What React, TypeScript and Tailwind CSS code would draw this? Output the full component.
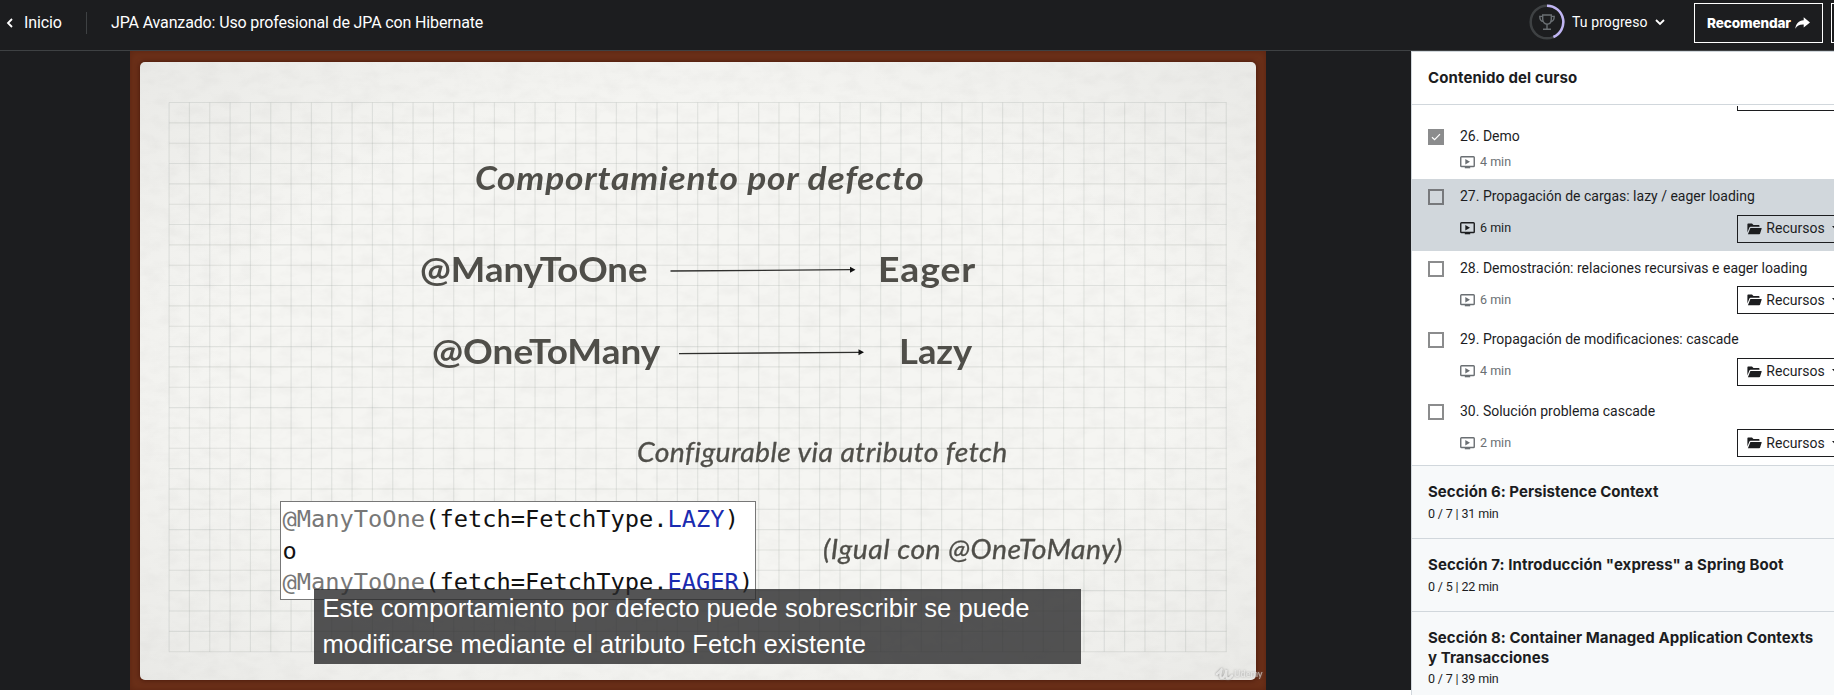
import React from "react";

type Lecture = { title: string; time: string; done?: boolean; active?: boolean; resources?: boolean };
type Section = { title: string; meta: string; tracking: string };

const lectures: Lecture[] = [
  { title: "26. Demo", time: "4 min", done: true },
  { title: "27. Propagación de cargas: lazy / eager loading", time: "6 min", active: true, resources: true },
  { title: "28. Demostración: relaciones recursivas e eager loading", time: "6 min", resources: true },
  { title: "29. Propagación de modificaciones: cascade", time: "4 min", resources: true },
  { title: "30. Solución problema cascade", time: "2 min", resources: true },
];

const sections: Section[] = [
  { title: "Sección 6: Persistence Context", meta: "0 / 7 | 31 min", tracking: "tracking-[0.04px]" },
  { title: 'Sección 7: Introducción "express" a Spring Boot', meta: "0 / 5 | 22 min", tracking: "tracking-[0.08px]" },
  { title: "Sección 8: Container Managed Application Contexts y Transacciones", meta: "0 / 7 | 39 min", tracking: "tracking-[0.05px]" },
];

function VideoIcon() {
  return (
    <svg width="15" height="13" viewBox="0 0 15 13" fill="none" className="shrink-0">
      <rect x="0.75" y="0.75" width="13.5" height="9.8" rx="0.8" stroke="currentColor" strokeWidth="1.4" />
      <path d="M5.3 3v5.4L10 5.7z" fill="currentColor" />
      <path d="M4.8 11h5.4v1.3H4.8z" fill="currentColor" />
    </svg>
  );
}

function FolderIcon() {
  return (
    <svg width="15" height="12" viewBox="0 0 15 12" className="shrink-0">
      <path d="M0.4 9.5V1.6C0.4 1 0.8 0.6 1.4 0.6H5l1.5 1.5h5c.6 0 1 .4 1 1v.7H3.6c-.6 0-1 .3-1.2.8z" fill="currentColor" />
      <path d="M3.4 4.9h10.9c.3 0 .5.3.4.6l-1.6 5c-.1.4-.5.7-.9.7H.9z" fill="currentColor" />
    </svg>
  );
}

function ResourcesButton() {
  return (
    <button className="flex h-7 w-[112px] shrink-0 items-center border border-[#1c1d1f] pl-[9px] text-[14px] text-[#1c1d1f]">
      <FolderIcon />
      <span className="ml-[4px] w-[59px] whitespace-nowrap">Recursos</span>
      <svg width="8" height="5" viewBox="0 0 8 5" className="ml-[7px] shrink-0">
        <path d="M0 0h8L4 4.5z" fill="currentColor" />
      </svg>
    </button>
  );
}

function LectureRow({ item }: { item: Lecture }) {
  return (
    <li className={`flex shrink-0 pl-4 pt-2 ${item.active ? "bg-[#d1d7dc]" : "bg-white"} ${item.resources ? "h-[71.6px]" : "h-[60px]"}`}>
      <span
        className={`mt-[2px] flex size-4 shrink-0 items-center justify-center ${
          item.done ? "bg-[#8b8c8d]" : item.active ? "border-2 border-[#77797c]" : "border-2 border-[#8b8c8d]"
        }`}
      >
        {item.done && (
          <svg width="10" height="8" viewBox="0 0 10 8" fill="none">
            <path d="M1 4.2l2.6 2.4L9 1.2" stroke="white" strokeWidth="1.2" />
          </svg>
        )}
      </span>
      <div className="ml-4 flex grow flex-col font-['Roboto']">
        <span className="h-[19.6px] whitespace-nowrap text-[14px] leading-[19.6px] text-[#1c1d1f]">{item.title}</span>
        <div className={`flex items-center ${item.resources ? "mt-2 h-7" : "mt-[6px] h-5"} ${item.active ? "text-[#1c1d1f]" : "text-[#6a6f73]"}`}>
          <VideoIcon />
          <span className="ml-[5px] w-[257px] shrink-0 text-[12.500px]">{item.time}</span>
          {item.resources && <ResourcesButton />}
        </div>
      </div>
    </li>
  );
}

function SectionRow({ item }: { item: Section }) {
  return (
    <li className="shrink-0 border-t border-[#d1d7dc] bg-[#f7f9fa] px-4 pb-4 pt-4 text-[#1c1d1f]">
      <h3 className={`max-w-[400px] text-[15px] font-bold leading-[19.6px] ${item.tracking}`}>{item.title}</h3>
      <p className="mt-[3.6px] font-['Roboto'] text-[12.500px] leading-[16.8px] tracking-[-0.15px]">{item.meta}</p>
    </li>
  );
}

function Header() {
  return (
    <header className="flex h-[51px] shrink-0 border-b border-[#3e4143] bg-[#1c1d1f] pb-[5px] font-['Roboto'] text-[16px] text-white">
      <div className="flex w-[1529px] shrink-0 items-center">
        <svg width="8" height="10" viewBox="0 0 8 10" fill="none" className="ml-[6px]">
          <path d="M6 1L2 5l4 4" stroke="white" strokeWidth="1.8" />
        </svg>
        <span className="ml-[10px] w-[62px] tracking-[-0.1px]">Inicio</span>
        <span className="h-[22px] w-px bg-[#3e4143]" />
        <span className="ml-6 whitespace-nowrap tracking-[-0.14px]">JPA Avanzado: Uso profesional de JPA con Hibernate</span>
      </div>
      <div className="flex w-[165px] shrink-0 items-center">
        <svg width="36" height="36" viewBox="0 0 36 36" fill="none" className="-ml-[0.5px] -mt-px">
          <circle cx="18" cy="18" r="16.3" stroke="#3e4143" strokeWidth="2.5" />
          <path d="M18 1.7A16.300 16.300 0 0 1 24.400 33" stroke="#c0b5f3" strokeWidth="2.5" />
          <g stroke="#6a6f73" strokeWidth="1.4">
            <path d="M13.7 11h8.6v4.2c0 3-1.9 4.9-4.3 4.9s-4.3-1.9-4.3-4.9z" />
            <path d="M13.7 12.4h-2.9c0 3 1 4.8 3.6 5.1M22.3 12.4h2.9c0 3-1 4.8-3.6 5.1M18 20v5M14 25.3h8" />
          </g>
        </svg>
        <span className="ml-[7.500px] w-[83px] whitespace-nowrap text-[14px] tracking-[0.1px]">Tu progreso</span>
        <svg width="10" height="7" viewBox="0 0 10 7" fill="none">
          <path d="M1 1l4 4 4-4" stroke="white" strokeWidth="1.8" />
        </svg>
      </div>
      <div className="mt-[3px] flex h-10 w-[129px] shrink-0 items-center border border-white pl-3">
        <span className="w-[87.500px] whitespace-nowrap font-['Inter'] text-[13.600px] font-extrabold tracking-[-0.15px]">Recomendar</span>
        <svg width="15" height="12" viewBox="0 0 15 12" className="shrink-0">
          <path d="M8.7 0.3L15 5.4l-6.3 5V7.5C4.6 7.3 2.2 8.600 0.3 11.700 0.900 6.600 3.700 3.500 8.700 3.200z" fill="white" />
        </svg>
      </div>
      <div className="ml-2 mt-[3px] h-10 w-[3px] shrink-0 border-y border-l border-white" />
    </header>
  );
}

function Slide() {
  const ink = "absolute origin-left whitespace-nowrap font-['Lato'] leading-[40px] text-[#4f4e49]";
  return (
    <div className="relative h-[639px] w-[1136px] shrink-0 overflow-hidden bg-[#6b3019] shadow-[inset_0_0_6px_#5a2411]">
      <div className="absolute left-[10px] top-[11px] h-[618px] w-[1115.500px] overflow-hidden rounded-[5px] bg-[#f5f5f2] shadow-[0_0_4px_1px_rgba(50,10,0,0.5)]">
        <svg width="1116" height="618" className="block">
          <defs>
            <filter id="paper" x="0" y="0" width="100%" height="100%">
              <feTurbulence type="fractalNoise" baseFrequency="0.05 0.09" numOctaves="5" seed="4" />
              <feColorMatrix values="0 0 0 0 0.5  0 0 0 0 0.49  0 0 0 0 0.48  0.2 0 0 0 -0.08" />
            </filter>
            <radialGradient id="vignette" cx="50%" cy="50%" r="70%">
              <stop offset="60%" stopColor="#80807e" stopOpacity="0" />
              <stop offset="100%" stopColor="#80807e" stopOpacity="0.1" />
            </radialGradient>
          </defs>
          <rect width="1116" height="618" filter="url(#paper)" />
          <rect width="1116" height="618" fill="url(#vignette)" />
          <g stroke="#8c9490" strokeOpacity="0.2" strokeWidth="1.1">
            {Array.from({ length: 53 }, (_, i) => (
              <line key={"v" + i} x1={29.1 + i * 20.33} x2={29.1 + i * 20.33} y1="40.5" y2="589.700" />
            ))}
            {Array.from({ length: 28 }, (_, i) => (
              <line key={"h" + i} x1="29.1" x2="1086.500" y1={40.5 + i * 20.34} y2={40.5 + i * 20.34} />
            ))}
          </g>
        </svg>
      </div>
      <span className={`${ink} left-[344.500px] top-[106px] scale-x-[1.07] text-[33px] font-bold italic tracking-[0.75px]`}>Comportamiento por defecto</span>
      <span className={`${ink} left-[290px] top-[197.500px] scale-x-[1.075] text-[34px] font-bold`}>@ManyToOne</span>
      <span className={`${ink} left-[748px] top-[197.500px] scale-x-[1.1] text-[34px] font-bold tracking-[0.8px]`}>Eager</span>
      <span className={`${ink} left-[302px] top-[279.500px] scale-x-[1.085] text-[34px] font-bold`}>@OneToMany</span>
      <span className={`${ink} left-[768.500px] top-[279.500px] scale-x-[1.07] text-[34px] font-bold`}>Lazy</span>
      <svg width="200" height="100" viewBox="0 0 200 100" className="absolute left-[540px] top-[210px]">
        <path d="M0.500 10L181 8.700M9 92.600L189 91.300" stroke="#2f2f2d" strokeWidth="1.3" />
        <path d="M180 5.700l5.500 3-5.500 3zM188.500 88.300l5.500 3-5.500 3z" fill="#111" />
      </svg>
      <span className={`${ink} left-[506.500px] top-[380.500px] scale-x-[1.07] text-[26.500px] italic tracking-[0.37px] [-webkit-text-stroke:0.3px_#4f4e49]`}>Configurable via atributo fetch</span>
      <span className={`${ink} left-[692.500px] top-[478px] scale-x-[1.07] text-[26.500px] italic tracking-[0.48px] [-webkit-text-stroke:0.3px_#4f4e49]`}>(Igual con @OneToMany)</span>
      <pre className="absolute left-[150px] top-[450px] h-[98.500px] w-[476px] border border-[#777] bg-white pl-[1.500px] pt-[2.300px] font-['DejaVu_Sans_Mono'] text-[23.7px] leading-[31.3px] text-[#111]">
        <span className="text-[#777]">@ManyToOne</span>(fetch=FetchType.<span className="text-[#1a2bb0]">LAZY</span>){"\n"}o{"\n"}
        <span className="text-[#777]">@ManyToOne</span>(fetch=FetchType.<span className="text-[#1a2bb0]">EAGER</span>)
      </pre>
      <div className="absolute left-[1086px] top-[616px] flex items-center text-[#f4f4f2]/80 [filter:drop-shadow(0_0_1px_#777)]">
        <svg width="17" height="14" viewBox="0 0 17 14" fill="none">
          <path d="M1 7C4 5 6 1.500 5.500 2.500 4.500 6 3.500 11 6 11 8.500 11 10 5.500 10.500 3 10 6 9.500 11.500 12 11.500 13.500 11.500 15 10 16 8.500" stroke="currentColor" strokeWidth="2.4" strokeLinecap="round" />
        </svg>
        <span className="ml-px font-['Lato'] text-[9px] font-bold leading-[14px] opacity-70">Udemy</span>
      </div>
      <p className="absolute left-[184px] top-[538px] h-[75px] w-[767px] bg-[#29292a]/80 pl-[8.500px] pt-[1px] font-['Liberation_Sans'] text-[25.600px] leading-[36px] text-white">
        Este comportamiento por defecto puede sobrescribir se puede
        <br />
        modificarse mediante el atributo Fetch existente
      </p>
    </div>
  );
}

export default function App() {
  return (
    <div className="flex h-[695px] w-[1834px] flex-col overflow-hidden bg-white font-['Inter',sans-serif]">
      <Header />
      <main className="flex h-[644px]">
        <div className="flex h-[639px] w-[1411px] shrink-0 bg-[#1c1d1f] pl-[130px]">
          <Slide />
        </div>
        <aside className="flex w-[423px] flex-col overflow-hidden border-l border-[#d1d7dc] bg-[#f7f9fa]">
          <div className="flex h-[54px] shrink-0 items-center border-y border-[#d1d7dc] bg-white pl-4 text-[15px] font-bold tracking-[0.1px] text-[#1c1d1f]">Contenido del curso</div>
          <ul className="flex flex-col">
            <li className="h-[14px] shrink-0 bg-white pl-[325px] pt-px">
              <div className="h-[5px] w-[112px] border-b border-l border-[#1c1d1f]" />
            </li>
            {lectures.map((l) => (
              <LectureRow key={l.title} item={l} />
            ))}
            {sections.map((s) => (
              <SectionRow key={s.title} item={s} />
            ))}
          </ul>
        </aside>
      </main>
    </div>
  );
}
